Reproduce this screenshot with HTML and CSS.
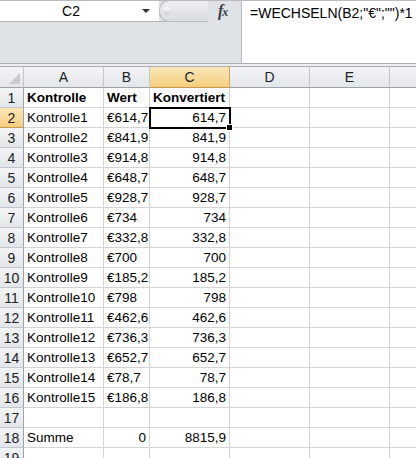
FILE: index.html
```html
<!DOCTYPE html>
<html>
<head>
<meta charset="utf-8">
<link rel="stylesheet" href="styles.css">
</head>
<body>
<div class="app">
  <div class="topbar">
    <div class="left">
      <div class="namerow">
        <div class="namebox"><span class="ref">C2</span><span class="arrow"></span></div>
        <div class="knob"><span class="dot"></span></div>
      </div>
      <div class="leftfill"></div>
    </div>
    <div class="fx"><span>f</span><span class="x">x</span></div>
    <div class="formula">=WECHSELN(B2;"€";"")*1</div>
  </div>
  <div class="sep"></div>
  <div class="sheet">
    <div class="hd corner"><span class="tri"></span></div>
    <div class="hd col">A</div>
    <div class="hd col">B</div>
    <div class="hd col sel">C</div>
    <div class="hd col">D</div>
    <div class="hd col">E</div>
    <div class="hd col last"></div>

    <div class="rh">1</div><div class="c b">Kontrolle</div><div class="c b">Wert</div><div class="c b">Konvertiert</div><div class="c"></div><div class="c"></div><div class="c last"></div>
    <div class="rh sel">2</div><div class="c">Kontrolle1</div><div class="c">€614,7</div><div class="c r active">614,7<span class="handle"></span></div><div class="c"></div><div class="c"></div><div class="c last"></div>
    <div class="rh">3</div><div class="c">Kontrolle2</div><div class="c">€841,9</div><div class="c r">841,9</div><div class="c"></div><div class="c"></div><div class="c last"></div>
    <div class="rh">4</div><div class="c">Kontrolle3</div><div class="c">€914,8</div><div class="c r">914,8</div><div class="c"></div><div class="c"></div><div class="c last"></div>
    <div class="rh">5</div><div class="c">Kontrolle4</div><div class="c">€648,7</div><div class="c r">648,7</div><div class="c"></div><div class="c"></div><div class="c last"></div>
    <div class="rh">6</div><div class="c">Kontrolle5</div><div class="c">€928,7</div><div class="c r">928,7</div><div class="c"></div><div class="c"></div><div class="c last"></div>
    <div class="rh">7</div><div class="c">Kontrolle6</div><div class="c">€734</div><div class="c r">734</div><div class="c"></div><div class="c"></div><div class="c last"></div>
    <div class="rh">8</div><div class="c">Kontrolle7</div><div class="c">€332,8</div><div class="c r">332,8</div><div class="c"></div><div class="c"></div><div class="c last"></div>
    <div class="rh">9</div><div class="c">Kontrolle8</div><div class="c">€700</div><div class="c r">700</div><div class="c"></div><div class="c"></div><div class="c last"></div>
    <div class="rh">10</div><div class="c">Kontrolle9</div><div class="c">€185,2</div><div class="c r">185,2</div><div class="c"></div><div class="c"></div><div class="c last"></div>
    <div class="rh">11</div><div class="c">Kontrolle10</div><div class="c">€798</div><div class="c r">798</div><div class="c"></div><div class="c"></div><div class="c last"></div>
    <div class="rh">12</div><div class="c">Kontrolle11</div><div class="c">€462,6</div><div class="c r">462,6</div><div class="c"></div><div class="c"></div><div class="c last"></div>
    <div class="rh">13</div><div class="c">Kontrolle12</div><div class="c">€736,3</div><div class="c r">736,3</div><div class="c"></div><div class="c"></div><div class="c last"></div>
    <div class="rh">14</div><div class="c">Kontrolle13</div><div class="c">€652,7</div><div class="c r">652,7</div><div class="c"></div><div class="c"></div><div class="c last"></div>
    <div class="rh">15</div><div class="c">Kontrolle14</div><div class="c">€78,7</div><div class="c r">78,7</div><div class="c"></div><div class="c"></div><div class="c last"></div>
    <div class="rh">16</div><div class="c">Kontrolle15</div><div class="c">€186,8</div><div class="c r">186,8</div><div class="c"></div><div class="c"></div><div class="c last"></div>
    <div class="rh">17</div><div class="c"></div><div class="c"></div><div class="c"></div><div class="c"></div><div class="c"></div><div class="c last"></div>
    <div class="rh">18</div><div class="c">Summe</div><div class="c r">0</div><div class="c r">8815,9</div><div class="c"></div><div class="c"></div><div class="c last"></div>
    <div class="rh">19</div><div class="c"></div><div class="c"></div><div class="c"></div><div class="c"></div><div class="c"></div><div class="c last"></div>
  </div>
</div>
</body>
</html>
```

FILE: styles.css
```css
html, body {
  margin: 0;
  padding: 0;
  background: #ffffff;
}
.app {
  width: 416px;
  height: 458px;
  overflow: hidden;
  font-family: "Liberation Sans", Arial, sans-serif;
  font-size: 13.5px;
  color: #000;
}
.topbar {
  display: flex;
  height: 62px;
  border-top: 1px solid #b9bcc1;
  border-bottom: 1px solid #a9acb1;
  background: #dfe2e6;
}
.left {
  width: 208px;
  display: flex;
  flex-direction: column;
}
.namerow {
  display: flex;
  height: 20px;
  border-bottom: 1px solid #b0b3b8;
}
.namebox {
  width: 159px;
  background: #fff;
  display: flex;
  align-items: center;
  position: relative;
}
.ref {
  flex: 1;
  text-align: center;
  font-size: 14px;
  padding-left: 0;
}
.arrow {
  width: 0;
  height: 0;
  border-left: 4px solid transparent;
  border-right: 4px solid transparent;
  border-top: 4px solid #333;
  margin-right: 9px;
}
.knob {
  flex: 1;
  background: linear-gradient(#eeeff1, #d9dce0);
  border: 1px solid #b8bbc0;
  border-right: none;
  border-radius: 10px 0 0 10px;
  margin-top: -1px;
  height: 20px;
  display: flex;
  align-items: center;
  padding-left: 4px;
}
.dot {
  width: 6px;
  height: 8px;
  border-radius: 3px;
  background: linear-gradient(#ffffff, #c9ccd0);
}
.leftfill {
  flex: 1;
}
.fx {
  width: 34px;
  border-right: 1px solid #b5b8bd;
  font-family: "Liberation Serif", serif;
  font-style: italic;
  font-weight: bold;
  font-size: 16px;
  color: #3c3f44;
  padding-top: 1px;
  padding-left: 10px;
  box-sizing: border-box;
  letter-spacing: -1px;
}
.fx .x {
  font-size: 12px;
}
.formula {
  flex: 1;
  background: #fff;
  padding: 4px 0 0 8px;
  font-size: 14px;
  white-space: nowrap;
}
.sep {
  height: 2px;
  background: #eceef1;
}
.sheet {
  display: grid;
  grid-template-columns: 24px 80px 46px 80px 80px 80px 1fr;
  grid-auto-rows: 20px;
  grid-template-rows: 22px;
}
.hd {
  background: linear-gradient(#f3f4f6, #e3e6ea);
  border-top: 1px solid #a9acb1;
  border-bottom: 1px solid #9fa3a8;
  border-right: 1px solid #c3c6ca;
  display: flex;
  align-items: center;
  justify-content: center;
  font-size: 14px;
  color: #222;
}
.hd.sel {
  background: linear-gradient(#fbe6b8, #f5cf7e);
  border-right-color: #c9a45f;
  border-bottom-color: #c59c4d;
}
.hd.last {
  border-right: none;
}
.corner {
  position: relative;
}
.tri {
  position: absolute;
  right: 3px;
  bottom: 3px;
  width: 0;
  height: 0;
  border-left: 11px solid transparent;
  border-bottom: 11px solid #c9ccd1;
}
.rh {
  background: linear-gradient(#f3f4f6, #e3e6ea);
  border-right: 1px solid #9fa3a8;
  border-bottom: 1px solid #c3c6ca;
  display: flex;
  align-items: center;
  justify-content: center;
  font-size: 14px;
  color: #222;
}
.rh.sel {
  background: linear-gradient(#fbe6b8, #f5cf7e);
  border-bottom-color: #c59c4d;
}
.c {
  border-right: 1px solid #d4d4d4;
  border-bottom: 1px solid #d4d4d4;
  display: flex;
  align-items: center;
  padding: 0 3px;
  white-space: nowrap;
  overflow: visible;
  min-width: 0;
}
.c.last {
  border-right: none;
}
.c.b {
  font-weight: bold;
}
.c.r {
  justify-content: flex-end;
}
.c.active {
  position: relative;
  outline: 2px solid #000;
  outline-offset: -1px;
  z-index: 2;
}
.handle {
  position: absolute;
  right: -4px;
  bottom: -4px;
  width: 5px;
  height: 5px;
  background: #000;
  border: 1px solid #fff;
}
```
